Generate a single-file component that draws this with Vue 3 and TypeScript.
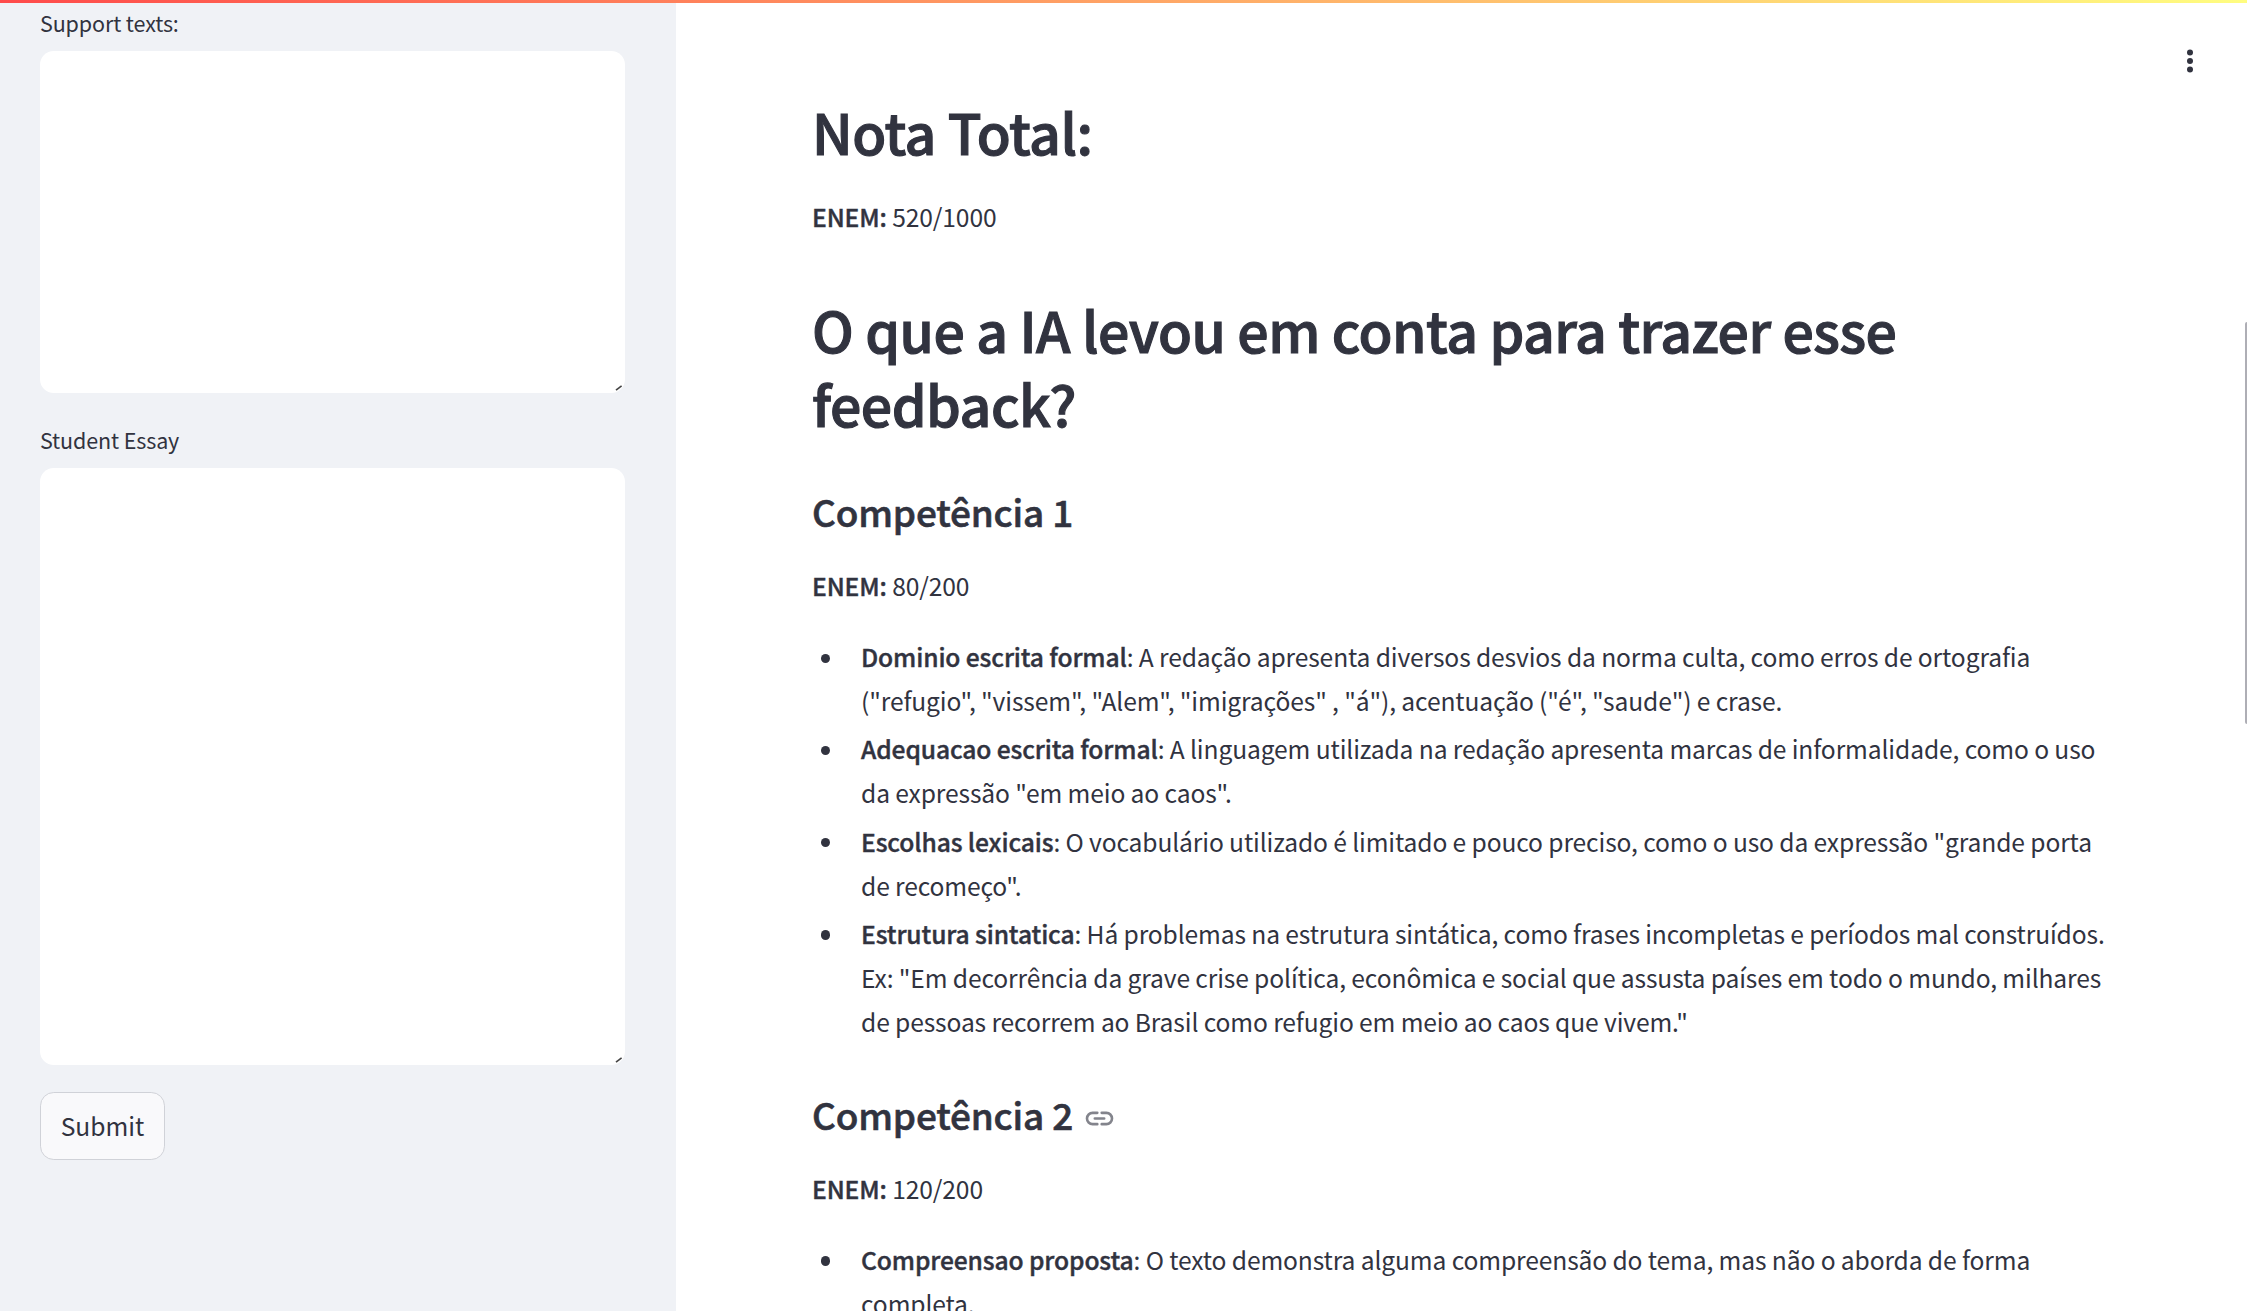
<script setup lang="ts">
interface Item {
  name: string
  text: string
}

interface Competence {
  title: string
  score: string
  linked: boolean
  items: Item[]
}

const competences: Competence[] = [
  {
    title: 'Competência 1',
    score: '80/200',
    linked: false,
    items: [
      {
        name: 'Dominio escrita formal',
        text: 'A redação apresenta diversos desvios da norma culta, como erros de ortografia\n("refugio", "vissem", "Alem", "imigrações" , "á"), acentuação ("é", "saude") e crase.',
      },
      {
        name: 'Adequacao escrita formal',
        text: 'A linguagem utilizada na redação apresenta marcas de informalidade, como o uso\nda expressão "em meio ao caos".',
      },
      {
        name: 'Escolhas lexicais',
        text: 'O vocabulário utilizado é limitado e pouco preciso, como o uso da expressão "grande porta\nde recomeço".',
      },
      {
        name: 'Estrutura sintatica',
        text: 'Há problemas na estrutura sintática, como frases incompletas e períodos mal construídos.\nEx: "Em decorrência da grave crise política, econômica e social que assusta países em todo o mundo, milhares\nde pessoas recorrem ao Brasil como refugio em meio ao caos que vivem."',
      },
    ],
  },
  {
    title: 'Competência 2',
    score: '120/200',
    linked: true,
    items: [
      {
        name: 'Compreensao proposta',
        text: 'O texto demonstra alguma compreensão do tema, mas não o aborda de forma\ncompleta.',
      },
    ],
  },
]
</script>

<template>
  <div class="app">
    <div class="decoration"></div>
    <aside class="sidebar">
      <label class="label" for="support">Support texts:</label>
      <div class="field support">
        <textarea id="support"></textarea>
        <svg class="grip" viewBox="0 0 8 6"><path d="M1 5.2L6.6 .8" /></svg>
      </div>
      <label class="label" for="essay">Student Essay</label>
      <div class="field essay">
        <textarea id="essay"></textarea>
        <svg class="grip" viewBox="0 0 8 6"><path d="M1 5.2L6.6 .8" /></svg>
      </div>
      <button class="submit" type="button">Submit</button>
    </aside>
    <main class="main">
      <h1 class="total">Nota Total:</h1>
      <p class="score"><strong>ENEM:</strong> 520/1000</p>
      <h1 class="question">O que a IA levou em conta para trazer esse<br />feedback?</h1>
      <section v-for="c in competences" :key="c.title" class="competence">
        <h3>
          <span>{{ c.title }}</span>
          <svg v-if="c.linked" class="link" viewBox="0 0 24 24">
            <path d="M10.4 7.9H7a4.1 4.1 0 0 0 0 8.2h3.4M13.6 7.9H17a4.1 4.1 0 0 1 0 8.2h-3.4M8.6 12h6.8" />
          </svg>
        </h3>
        <p class="score"><strong>ENEM:</strong> {{ c.score }}</p>
        <ul>
          <li v-for="item in c.items" :key="item.name"><strong>{{ item.name }}</strong>: {{ item.text }}</li>
        </ul>
      </section>
    </main>
    <svg class="menu" viewBox="0 0 8 24">
      <circle cx="4" cy="3.5" r="3" />
      <circle cx="4" cy="12" r="3" />
      <circle cx="4" cy="20.5" r="3" />
    </svg>
    <div class="scroll-thumb"></div>
  </div>
</template>

<style>
body {
  margin: 0;
  overflow: hidden;
}
</style>

<style scoped>
.app {
  position: relative;
  display: flex;
  width: 2247px;
  height: 1311px;
  overflow: hidden;
  background: #fff;
  color: #31333f;
  font-family: "Noto Sans CJK SC", "Noto Sans", sans-serif;
  font-size: 24.62px;
  line-height: 44px;
  letter-spacing: -0.12px;
}
.decoration {
  position: absolute;
  top: 0;
  left: 0;
  width: 100%;
  height: 3px;
  background: linear-gradient(90deg, #ff4b4b, #fffd80);
}
.sidebar {
  box-sizing: border-box;
  flex: none;
  display: flex;
  flex-direction: column;
  align-items: flex-start;
  width: 676px;
  padding: 4px 51px 0 40px;
  background: #f0f2f6;
}
.label {
  height: 47px;
  font-size: 21.5px;
  line-height: 38px;
}
.field {
  position: relative;
  width: 585px;
}
.support {
  height: 342px;
  margin-bottom: 28px;
}
.essay {
  height: 597px;
  margin-bottom: 27px;
}
textarea {
  display: block;
  box-sizing: border-box;
  width: 100%;
  height: 100%;
  padding: 20px;
  border: 0;
  border-radius: 13.75px;
  outline: 0;
  background: #fff;
  resize: none;
}
.grip {
  position: absolute;
  right: 2px;
  bottom: 2px;
  width: 8px;
  height: 6px;
  fill: none;
  stroke: #444;
  stroke-width: 1.6;
}
.submit {
  box-sizing: border-box;
  width: 125px;
  height: 68px;
  padding: 0 0 3px;
  border: 1px solid #d0d2d8;
  border-radius: 13.75px;
  background: #f9f9fb;
  color: inherit;
  font: inherit;
}
.main {
  flex: 1;
  padding: 94px 0 0 136px;
  white-space: nowrap;
}
h1,
h3,
p,
ul {
  margin: 0;
}
h1 {
  font-size: 55.4px;
  font-weight: 500;
  line-height: 74px;
  letter-spacing: -0.52px;
  -webkit-text-stroke: 1.1px #31333f;
}
.total {
  margin-bottom: 26px;
}
.question {
  margin: 54px 0 46px;
}
h3 {
  display: flex;
  align-items: center;
  font-size: 36.9px;
  font-weight: 500;
  line-height: 50px;
  letter-spacing: -0.16px;
  margin-bottom: 27px;
  -webkit-text-stroke: 0.6px #31333f;
}
strong {
  font-weight: 500;
  -webkit-text-stroke: 0.4px #31333f;
}
.competence {
  margin-bottom: 46px;
}
ul {
  display: flex;
  flex-direction: column;
  gap: 4.3px;
  padding: 0 0 0 49px;
  margin-top: 27px;
  list-style: none;
}
li {
  position: relative;
  white-space: pre;
}
li::before {
  content: "";
  position: absolute;
  left: -40.5px;
  top: 19.5px;
  width: 9.4px;
  height: 9.4px;
  border-radius: 50%;
  background: #31333f;
}
.link {
  width: 33px;
  height: 33px;
  margin: 9px 0 0 10px;
  fill: none;
  stroke: #83848c;
  stroke-width: 1.9;
  stroke-linecap: round;
}
.menu {
  position: absolute;
  top: 49px;
  left: 2186px;
  width: 8px;
  height: 24px;
  fill: #31333f;
}
.scroll-thumb {
  position: absolute;
  top: 322px;
  right: 0;
  width: 2px;
  height: 402px;
  border-radius: 2px 0 0 2px;
  background: #aeaeb5;
}
</style>
